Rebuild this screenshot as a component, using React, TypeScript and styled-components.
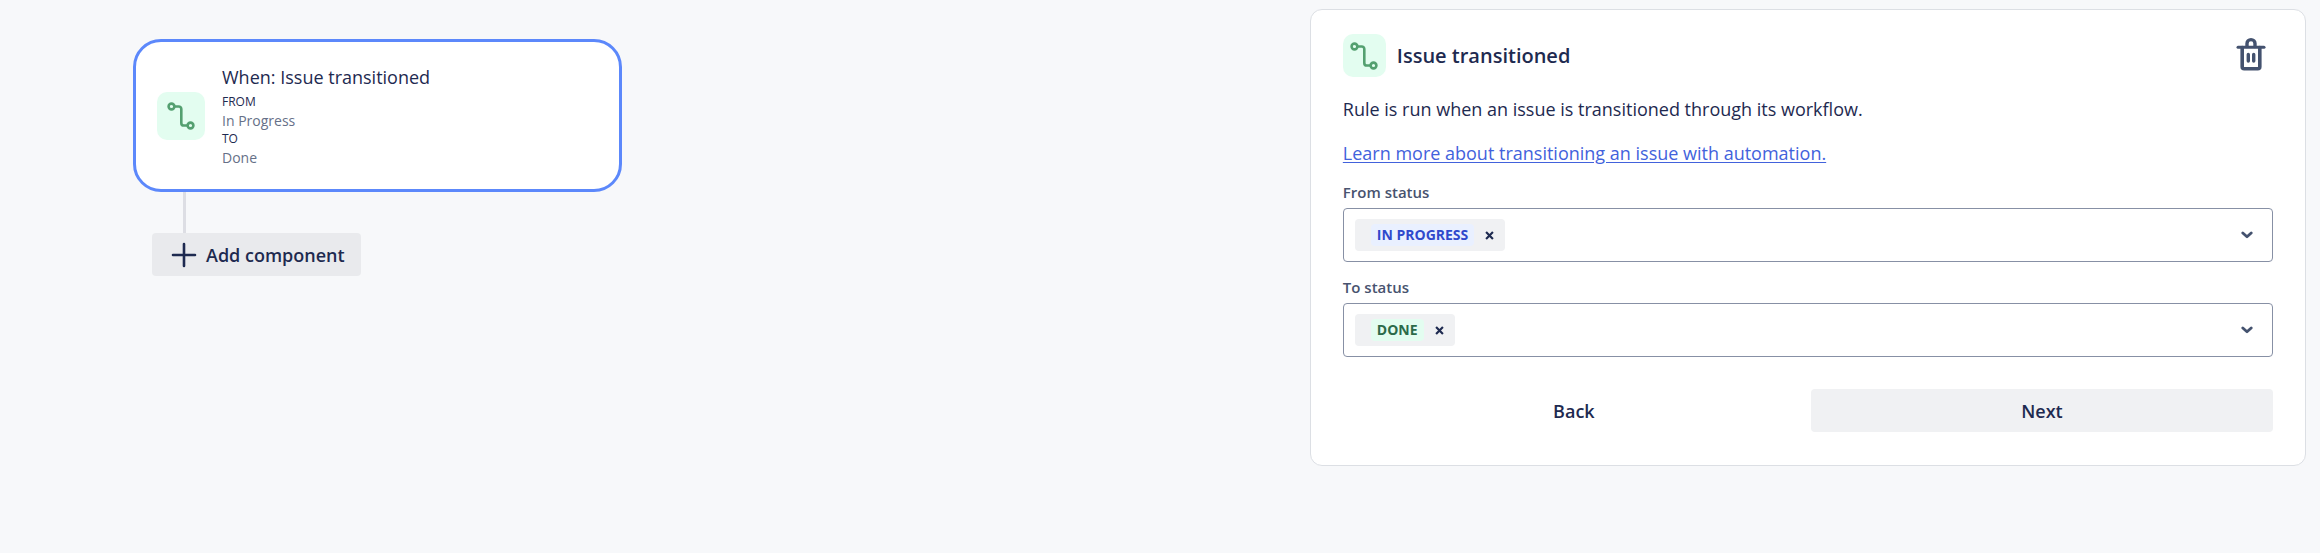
import { useId } from "react";
import styled, { createGlobalStyle } from "styled-components";

const GlobalStyle = createGlobalStyle`
  *, *::before, *::after { box-sizing: border-box; }
  body {
    margin: 0;
    background: #f7f8fa;
    color: #1e2a50;
    font-family: "Open Sans", "Noto Sans", sans-serif;
    font-size: 18px;
    line-height: 24px;
  }
  button, input { font: inherit; color: inherit; }
`;

const Page = styled.main`
  display: flex;
  align-items: flex-start;
  min-height: 100vh;
  padding: 9px 14px 0 0;
`;

const Canvas = styled.section`
  flex: 1;
  min-width: 0;
  padding: 30px 24px 24px 133px;
`;

const RuleNode = styled.article`
  display: flex;
  align-items: center;
  gap: 17px;
  max-width: 489px;
  min-height: 153px;
  padding: 21px;
  border: 3px solid #5c88fb;
  border-radius: 28px;
  background: #fff;
`;

const IconTile = styled.span<{ $size: number }>`
  display: flex;
  flex: none;
  align-items: center;
  justify-content: center;
  width: ${(p) => p.$size}px;
  height: ${(p) => p.$size}px;
  border-radius: 10px;
  background: #e3fdf0;
  color: #54a070;
`;

const NodeTitle = styled.h2`
  margin: 0 0 3px;
  font-size: 18px;
  font-weight: 400;
  line-height: 26px;
`;

const Details = styled.dl`
  margin: 0;
`;

const Term = styled.dt`
  font-size: 12px;
  line-height: 18px;
  font-weight: 500;
  text-transform: uppercase;
`;

const Value = styled.dd`
  margin: 0;
  font-size: 14px;
  line-height: 19px;
  color: #667088;
`;

const Connector = styled.div`
  width: 3px;
  height: 41px;
  margin-left: 50px;
  background: #dddee4;
`;

const Button = styled.button<{ $tone: "plain" | "light" | "medium" }>`
  display: inline-flex;
  align-items: center;
  justify-content: center;
  gap: 7px;
  height: 43px;
  padding: 0 16px;
  border: 0;
  border-radius: 4px;
  background: ${(p) =>
    ({ plain: "transparent", light: "#f0f1f3", medium: "#e9eaed" })[p.$tone]};
  font-size: 18px;
  font-weight: 600;
  cursor: pointer;
`;

const AddButton = styled(Button)`
  margin-left: 19px;
  padding-left: 17px;
`;

const Panel = styled.section`
  flex: none;
  width: 43.2%;
  padding: 24px 32px 33px;
  border: 1px solid #dcdfe4;
  border-radius: 12px;
  background: #fff;
`;

const PanelHeader = styled.header`
  display: flex;
  align-items: center;
  gap: 11px;
  height: 43px;
`;

const PanelTitle = styled.h1`
  flex: 1;
  margin: 0;
  font-size: 20px;
  line-height: 28px;
  font-weight: 600;
`;

const IconButton = styled.button`
  display: flex;
  flex: none;
  align-items: center;
  justify-content: center;
  padding: 0;
  border: 0;
  background: none;
  color: #44526f;
  cursor: pointer;
`;

const DeleteButton = styled(IconButton)`
  width: 45px;
  height: 43px;
  padding-bottom: 4px;
`;

const Paragraph = styled.p`
  margin: 20px 0 0;
  line-height: 24px;
`;

const Link = styled.a`
  color: #4262dc;
  text-decoration: underline;
  text-underline-offset: 2px;
`;

const Fields = styled.div`
  display: grid;
  gap: 15px;
  margin-top: 17px;
`;

const Label = styled.label`
  display: block;
  padding-bottom: 6px;
  font-size: 15px;
  line-height: 20px;
  font-weight: 600;
  color: #48536f;
`;

const SelectBox = styled.div`
  display: flex;
  align-items: center;
  gap: 4px;
  height: 54px;
  padding: 0 15px 0 11px;
  border: 1px solid #8790a5;
  border-radius: 4px;
  background: #fff;
`;

const Tag = styled.span`
  display: flex;
  flex: none;
  align-items: center;
  height: 32px;
  padding-left: 16px;
  border-radius: 4px;
  background: #f0f1f3;
`;

const Lozenge = styled.span<{ $done?: boolean }>`
  padding: 0 6px;
  border-radius: 4px;
  background: ${(p) => (p.$done ? "#e3fdf0" : "#e9f0ff")};
  color: ${(p) => (p.$done ? "#2c6b49" : "#3049cc")};
  font-size: 14px;
  line-height: 22px;
  font-weight: 700;
  text-transform: uppercase;
`;

const RemoveButton = styled(IconButton)`
  width: 31px;
  height: 32px;
  color: #1e2a50;
`;

const SearchInput = styled.input`
  flex: 1;
  min-width: 0;
  border: 0;
  outline: 0;
  background: transparent;
`;

const ToggleButton = styled(IconButton)`
  width: 21px;
  height: 32px;
`;

const Footer = styled.footer`
  display: grid;
  grid-template-columns: 1fr 1fr;
  gap: 6px;
  margin-top: 32px;
`;

function TransitionIcon({ size }: { size: number }) {
  return (
    <svg width={size} height={size} viewBox="0 0 28 28" fill="none" stroke="currentColor" strokeWidth="2.6" aria-hidden="true">
      <circle cx="4.5" cy="4.5" r="2.9" />
      <path d="M7.5 4.5h4.2a2.6 2.6 0 0 1 2.6 2.6v13.8a2.6 2.6 0 0 0 2.6 2.6h3.6" />
      <circle cx="23.5" cy="23.5" r="2.9" />
    </svg>
  );
}

function PlusIcon() {
  return (
    <svg width="30" height="30" viewBox="0 0 30 30" stroke="currentColor" strokeWidth="2.6" strokeLinecap="round" aria-hidden="true">
      <path d="M15 4v22M4 15h22" />
    </svg>
  );
}

function TrashIcon() {
  return (
    <svg width="30" height="34" viewBox="0 0 30 34" fill="none" stroke="currentColor" strokeLinecap="round" strokeLinejoin="round" aria-hidden="true">
      <path d="M2 10.2h26" strokeWidth="3" />
      <path d="M6.2 10.5v19.2a2 2 0 0 0 2 2h13.6a2 2 0 0 0 2-2V10.5" strokeWidth="3.6" />
      <path d="M11 9.5V6.6a4 4 0 0 1 8 0v2.9" strokeWidth="3.4" />
      <path d="M12.3 17.4v6.6M17.7 17.4v6.6" strokeWidth="3.4" />
    </svg>
  );
}

function CrossIcon() {
  return (
    <svg width="9" height="9" viewBox="0 0 10 10" stroke="currentColor" strokeWidth="2.4" aria-hidden="true">
      <path d="M1.2 1.2l7.6 7.6M8.8 1.2L1.2 8.8" />
    </svg>
  );
}

function ChevronIcon() {
  return (
    <svg width="12" height="8" viewBox="0 0 12 8" fill="none" stroke="currentColor" strokeWidth="2.8" strokeLinecap="round" strokeLinejoin="round" aria-hidden="true">
      <path d="M1.8 2L6 5.8 10.2 2" />
    </svg>
  );
}

function StatusField({ label, status, done }: { label: string; status: string; done?: boolean }) {
  const id = useId();
  return (
    <div>
      <Label htmlFor={id}>{label}</Label>
      <SelectBox>
        <Tag>
          <Lozenge $done={done}>{status}</Lozenge>
          <RemoveButton type="button" aria-label={`Remove ${status}`}>
            <CrossIcon />
          </RemoveButton>
        </Tag>
        <SearchInput id={id} type="text" role="combobox" aria-expanded="false" autoComplete="off" />
        <ToggleButton type="button" aria-label={`Open ${label}`}>
          <ChevronIcon />
        </ToggleButton>
      </SelectBox>
    </div>
  );
}

export default function App() {
  return (
    <>
      <GlobalStyle />
      <Page>
        <Canvas>
          <RuleNode>
            <IconTile $size={48}>
              <TransitionIcon size={28} />
            </IconTile>
            <div>
              <NodeTitle>When: Issue transitioned</NodeTitle>
              <Details>
                <Term>From</Term>
                <Value>In Progress</Value>
                <Term>To</Term>
                <Value>Done</Value>
              </Details>
            </div>
          </RuleNode>
          <Connector />
          <AddButton type="button" $tone="medium">
            <PlusIcon />
            Add component
          </AddButton>
        </Canvas>
        <Panel>
          <PanelHeader>
            <IconTile $size={43}>
              <TransitionIcon size={28} />
            </IconTile>
            <PanelTitle>Issue transitioned</PanelTitle>
            <DeleteButton type="button" aria-label="Delete">
              <TrashIcon />
            </DeleteButton>
          </PanelHeader>
          <Paragraph>Rule is run when an issue is transitioned through its workflow.</Paragraph>
          <Paragraph>
            <Link href="#">Learn more about transitioning an issue with automation.</Link>
          </Paragraph>
          <Fields>
            <StatusField label="From status" status="In Progress" />
            <StatusField label="To status" status="Done" done />
          </Fields>
          <Footer>
            <Button type="button" $tone="plain">Back</Button>
            <Button type="button" $tone="light">Next</Button>
          </Footer>
        </Panel>
      </Page>
    </>
  );
}
